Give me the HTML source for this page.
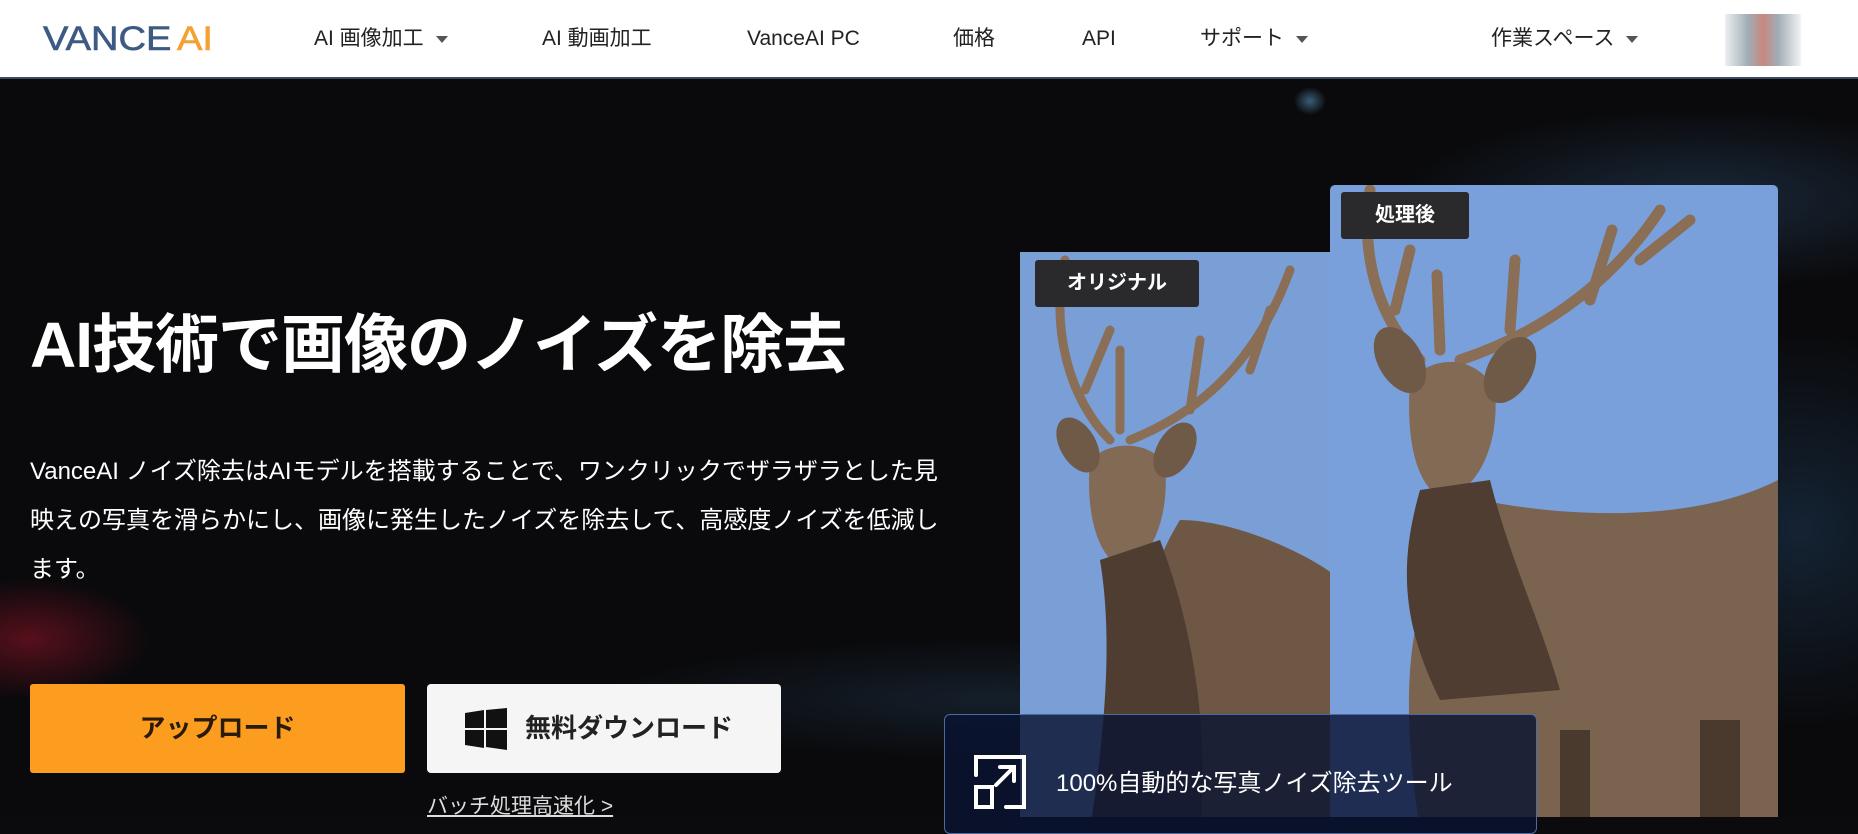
<!DOCTYPE html>
<html><head><meta charset="utf-8">
<style>
*{margin:0;padding:0;box-sizing:border-box}
body{width:1858px;height:817px;overflow:hidden;background:#0b0b0d;font-family:"Liberation Sans","Noto Sans CJK JP",sans-serif;position:relative}
.nav{position:absolute;left:0;top:0;width:1858px;height:79px;background:#fff;border-bottom:2px solid #3b4a63;z-index:5}
.nav span.i{position:absolute;top:24px;height:30px;line-height:30px;font-size:21px;color:#222;white-space:nowrap;display:flex;align-items:center}
.tri{display:inline-block;width:0;height:0;border-left:6px solid transparent;border-right:6px solid transparent;border-top:7px solid #555;margin-left:12px}
.logo{position:absolute;left:43px;top:19px;font-size:34px;font-weight:400;color:#3d5a85;line-height:40px;white-space:nowrap;transform:scaleX(1.12);transform-origin:left;-webkit-text-stroke:0.6px #3d5a85}
.hero{position:absolute;left:0;top:79px;width:1858px;height:738px;background:
radial-gradient(ellipse 120px 60px at 30px 560px,rgba(150,20,40,.55),transparent),
radial-gradient(ellipse 300px 90px at 1700px 120px,rgba(40,70,100,.5),transparent),
radial-gradient(ellipse 200px 200px at 1800px 450px,rgba(30,60,90,.5),transparent),
radial-gradient(ellipse 400px 60px at 1000px 620px,rgba(40,70,100,.35),transparent),
radial-gradient(ellipse 16px 14px at 1310px 22px,rgba(90,150,190,.6),transparent),
#0a0a0c}
h1{position:absolute;left:30px;top:294px;font-size:64px;font-weight:700;color:#fff;letter-spacing:-1px;white-space:nowrap}
.p{position:absolute;left:30px;top:447px;width:925px;font-size:24px;line-height:49px;color:#fff}
.b1{position:absolute;left:30px;top:684px;width:375px;height:89px;background:#fc9d20;border-radius:3px;font-size:26px;font-weight:700;color:#2a1a08;text-align:center;line-height:89px}
.b2{position:absolute;left:427px;top:684px;width:354px;height:89px;background:#f5f5f5;border-radius:4px;font-size:26px;font-weight:700;color:#222;line-height:89px;padding-left:98px}
.link{position:absolute;left:427px;top:790px;font-size:21px;color:#ddd;text-decoration:underline}
.lab{position:absolute;background:#2a2a2c;color:#fff;font-weight:700;font-size:20px;border-radius:3px;text-align:center;z-index:3}
.feat{position:absolute;left:944px;top:714px;width:593px;height:120px;background:rgba(10,20,50,.82);border:1px solid #4a6aa0;border-radius:6px;z-index:4}
.feat span{position:absolute;left:111px;top:48px;color:#fff;font-size:24px}
</style></head><body>
<div class="nav">
<div class="logo">VANCE<span style="color:#f4a033;-webkit-text-stroke:0.6px #f4a033;margin-left:5px">AI</span></div>
<span class="i" style="left:314px">AI 画像加工<i class="tri"></i></span>
<span class="i" style="left:542px">AI 動画加工</span>
<span class="i" style="left:747px">VanceAI PC</span>
<span class="i" style="left:953px">価格</span>
<span class="i" style="left:1082px">API</span>
<span class="i" style="left:1200px">サポート<i class="tri"></i></span>
<span class="i" style="left:1491px">作業スペース<i class="tri"></i></span>
<div style="position:absolute;left:1725px;top:14px;width:76px;height:52px;background:linear-gradient(90deg,#e8ecef,#8a9aa3 30%,#b86a60 50%,#8a9aa3 70%,#eef0f2);opacity:.8"></div>
</div>
<div class="hero"></div>
<h1>AI技術で画像のノイズを除去</h1>
<div class="p">VanceAI ノイズ除去はAIモデルを搭載することで、ワンクリックでザラザラとした見映えの写真を滑らかにし、画像に発生したノイズを除去して、高感度ノイズを低減します。</div>
<div class="b1">アップロード</div>
<div class="b2"><svg style="position:absolute;left:38px;top:24px" width="42" height="42" viewBox="0 0 42 42"><path d="M0 5L19 2V20H0Z M21 2L42 0V20H21Z M0 22H19V40L0 37Z M21 22H42V42L21 39Z" fill="#111"/></svg>無料ダウンロード</div>
<div class="link">バッチ処理高速化 &gt;</div>

<svg style="position:absolute;left:0;top:0" width="1858" height="817">
<defs>
<clipPath id="c1"><rect x="1020" y="252" width="310" height="600"/></clipPath>
<clipPath id="c2"><rect x="1330" y="185" width="448" height="640" rx="5"/></clipPath>
</defs>
<g clip-path="url(#c1)">
<rect x="1020" y="252" width="310" height="600" fill="#7a9ed6"/>
<g fill="none" stroke="#8a6e55" stroke-width="9" stroke-linecap="round">
<path d="M1110 440 C1070 400 1050 330 1065 260"/><path d="M1085 390 L1110 330"/><path d="M1130 440 C1180 420 1250 380 1290 270"/><path d="M1190 410 L1200 340"/><path d="M1250 370 L1270 310"/><path d="M1120 430 L1120 350"/>
</g>
<path d="M1180 520 C1240 520 1320 560 1340 580 V830 H1140 C1130 700 1130 600 1180 520Z" fill="#6e5845"/>
<path d="M1090 460 C1110 440 1150 440 1165 465 C1170 520 1150 560 1125 570 C1100 560 1085 520 1090 460Z" fill="#826a55"/>
<ellipse cx="1078" cy="445" rx="18" ry="30" fill="#6f5a48" transform="rotate(-30 1078 445)"/>
<ellipse cx="1175" cy="450" rx="18" ry="30" fill="#6f5a48" transform="rotate(30 1175 450)"/>
<path d="M1100 560 C1110 620 1110 700 1090 830 H1200 C1210 720 1190 620 1160 540Z" fill="#4e3d30"/>
</g>
<g clip-path="url(#c2)">
<rect x="1330" y="185" width="448" height="640" fill="#7aa0dc"/>
<g fill="none" stroke="#8a6e55" stroke-width="11" stroke-linecap="round">
<path d="M1420 360 C1380 320 1360 260 1370 190"/><path d="M1395 310 L1410 250"/><path d="M1460 360 C1520 340 1600 300 1660 210"/><path d="M1510 330 L1515 260"/><path d="M1590 300 L1612 230"/><path d="M1640 260 L1690 220"/><path d="M1440 350 L1437 275"/>
</g>
<path d="M1480 500 C1580 520 1700 520 1778 480 V830 H1420 C1400 700 1400 580 1480 500Z" fill="#7a6450"/>
<path d="M1410 380 C1440 350 1480 360 1495 390 C1500 450 1475 490 1445 500 C1420 490 1405 450 1410 380Z" fill="#826a55"/>
<ellipse cx="1400" cy="360" rx="22" ry="36" fill="#6f5a48" transform="rotate(-30 1400 360)"/>
<ellipse cx="1510" cy="370" rx="22" ry="36" fill="#6f5a48" transform="rotate(30 1510 370)"/>
<path d="M1420 490 C1400 560 1400 620 1440 700 L1560 690 C1540 620 1510 560 1490 480Z" fill="#4e3d30"/>
<rect x="1560" y="730" width="30" height="100" fill="#4a3a2e"/><rect x="1700" y="720" width="40" height="110" fill="#4a3a2e"/>
</g>
</svg>
<div class="lab" style="left:1035px;top:260px;width:164px;height:47px;line-height:47px">オリジナル</div>
<div class="lab" style="left:1341px;top:192px;width:128px;height:47px;line-height:47px">処理後</div>
<div class="feat">
<svg style="position:absolute;left:29px;top:40px" width="54" height="54" viewBox="0 0 54 54" fill="none" stroke="#fff" stroke-width="4" stroke-linecap="round"><path d="M2 20V2H50V52H32"/><path d="M2 32V52H18V32Z"/><path d="M22 30L40 12M26 12H40V26"/></svg>
<span>100%自動的な写真ノイズ除去ツール</span>
</div>
</body></html>
